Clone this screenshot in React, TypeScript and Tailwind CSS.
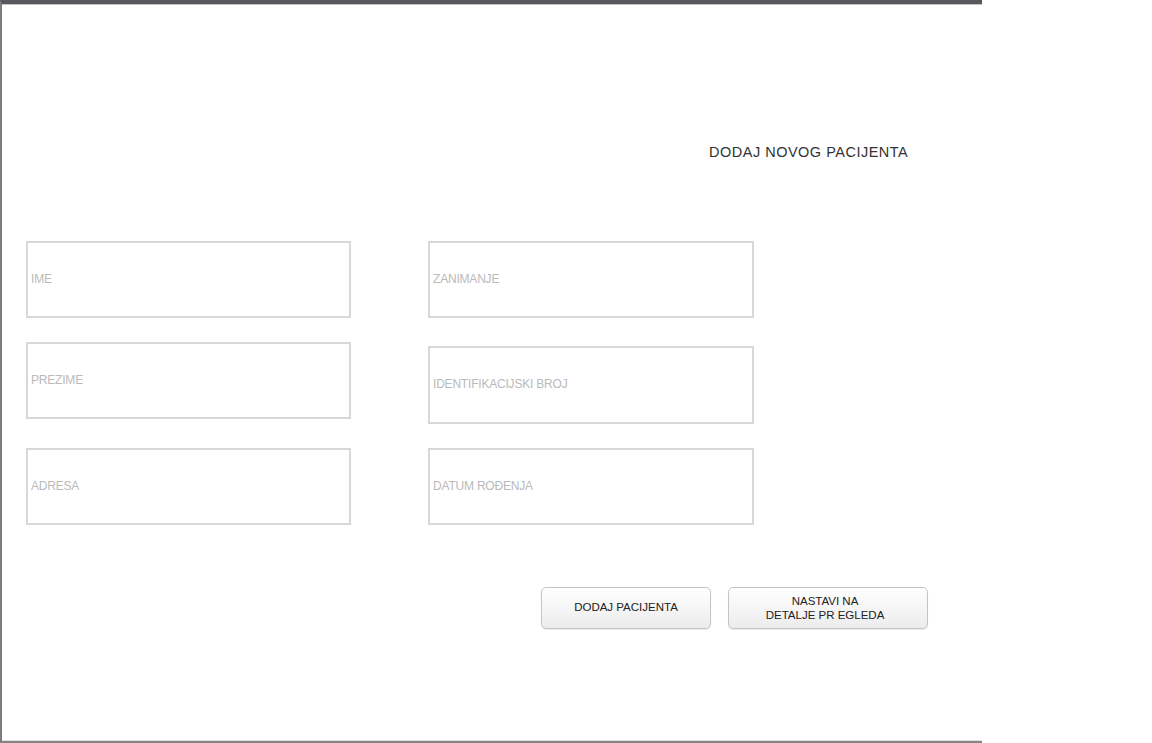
import React from "react";

const font = { fontFamily: '"Liberation Sans", Arial, sans-serif' };

function Field({ label, className }: { label: string; className: string }) {
  return (
    <div
      className={`flex h-[77px] items-center border-2 border-[#d8d8d8] bg-white pb-[2px] pl-[3px] text-[12px] tracking-[-0.2px] text-[#bababa] ${className}`}
    >
      {label}
    </div>
  );
}

export default function App() {
  return (
    <div className="h-[743px] w-[1152px] bg-white" style={font}>
      <div className="flex h-[743px] w-[982px] flex-col border-t-[4px] border-l-2 border-b-2 border-t-[#58585c] border-l-[#7c7c7c] border-b-[#858585]">
        <div className="flex h-full flex-col border-t border-b border-t-[#c4c4c4] border-b-[#e2e2e2]">
          {/* header */}
          <div className="pt-[137px] pl-[707px] text-[14.5px] leading-[20px] tracking-[0.5px] text-[#333]">
            DODAJ NOVOG PACIJENTA
          </div>

          {/* form columns */}
          <div className="mt-[79px] flex gap-[77px] pl-[24px]">
            <div className="flex w-[325px] flex-col">
              <Field label="IME" className="" />
              <Field label="PREZIME" className="mt-[24px]" />
              <Field label="ADRESA" className="mt-[29px]" />
            </div>
            <div className="flex w-[326px] flex-col">
              <Field label="ZANIMANJE" className="" />
              <Field label="IDENTIFIKACIJSKI BROJ" className="mt-[28px] h-[78px]" />
              <Field label="DATUM ROĐENJA" className="mt-[24px]" />
            </div>
          </div>

          {/* buttons */}
          <div className="mt-[62px] flex gap-[17px] pl-[539px]">
            <button className="flex h-[42px] w-[170px] items-center justify-center rounded-[5px] border border-[#c4c4c4] bg-gradient-to-b from-white to-[#ececec] text-[11.5px] text-[#222] shadow-[0_1px_1px_rgba(0,0,0,0.08)]">
              DODAJ PACIJENTA
            </button>
            <button className="flex h-[42px] w-[200px] flex-col items-center justify-center rounded-[5px] border border-[#c4c4c4] bg-gradient-to-b from-white to-[#ececec] pr-[6px] text-[11.5px] leading-[14.5px] text-[#222] shadow-[0_1px_1px_rgba(0,0,0,0.08)]">
              <span>NASTAVI NA</span>
              <span>DETALJE PR EGLEDA</span>
            </button>
          </div>
        </div>
      </div>
    </div>
  );
}
